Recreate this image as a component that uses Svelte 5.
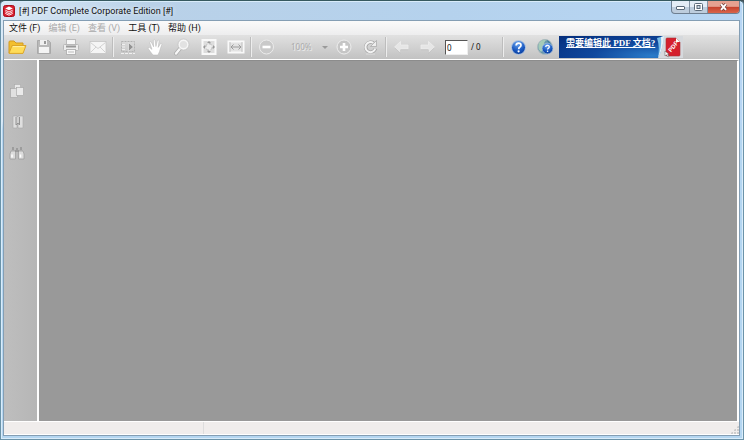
<script>
  const menus = [
    { label: '文件 (F)', off: false },
    { label: '编辑 (E)', off: true },
    { label: '查看 (V)', off: true },
    { label: '工具 (T)', off: false },
    { label: '帮助 (H)', off: false },
  ];
  let page = $state('0');
  let zoom = $state('100%');
</script>

<div class="window">
  <header class="title">
    <svg class="logo" viewBox="0 0 12 12" aria-hidden="true">
      <rect x=".5" y=".5" width="11" height="11" rx="2" fill="#d91f2d" stroke="#a90f1c" />
      <path d="M6 1.6 9.8 3.4 6 5.3 2.2 3.4Z" fill="#fff" />
      <path d="M2.3 5.2 6 7l3.7-1.8M2.3 6.8 6 8.6l3.7-1.8M2.3 8.4 6 10.2l3.7-1.8" fill="none" stroke="#fff" stroke-width=".9" />
    </svg>
    <h1>[#] PDF Complete Corporate Edition [#]</h1>
    <div class="controls">
      <button aria-label="Minimize">
        <svg viewBox="0 0 11 8"><rect x="1.5" y="3.5" width="8" height="3" rx=".5" fill="#fff" stroke="#5b6a79" /></svg>
      </button>
      <button aria-label="Maximize">
        <svg viewBox="0 0 11 8"><rect x="1.5" y=".5" width="8" height="7" rx="1" fill="#fff" stroke="#5b6a79" /><rect x="4" y="2.5" width="3" height="3" fill="#cdd9e5" stroke="#5b6a79" /></svg>
      </button>
      <button class="close" aria-label="Close">
        <svg viewBox="0 0 11 8"><path d="M3 1.2 8 6.8M8 1.2 3 6.8" stroke="#75413c" stroke-width="3.4" /><path d="M3 1.2 8 6.8M8 1.2 3 6.8" stroke="#fff" stroke-width="2" /></svg>
      </button>
    </div>
  </header>

  <div class="client">
    <nav class="menu">
      {#each menus as m}
        <button disabled={m.off}>{m.label}</button>
      {/each}
    </nav>

    <div class="toolbar">
      <button aria-label="打开">
        <svg viewBox="0 0 20 18">
          <path d="M2 15V4q0-1 1-1h4l2 2h7v3" fill="#f3bf2e" stroke="#d39b22" />
          <path d="M2 15.4 5 7.5h14l-3 7.9Z" fill="#ffdc59" stroke="#dba52a" />
          <path d="M6 8.6h11" stroke="#fff0a5" />
        </svg>
      </button>
      <button disabled aria-label="保存">
        <svg viewBox="0 0 20 18">
          <path d="M4 2.5h10.5l2 2v11h-13v-13Z" fill="#b9b9b9" stroke="#a9a9a9" />
          <rect x="6" y="2" width="7" height="5" fill="#f0f0f0" /><rect x="10" y="3" width="2" height="3" fill="#999" />
          <rect x="5" y="9" width="10" height="6" fill="#f4f4f4" />
        </svg>
      </button>
      <button disabled aria-label="打印">
        <svg viewBox="0 0 20 18">
          <rect x="5.5" y="1.5" width="9" height="6" fill="#f6f6f6" stroke="#bbb" />
          <rect x="2.5" y="6.5" width="15" height="6" rx="1" fill="#ececec" stroke="#b8b8b8" />
          <path d="M5 8.5h10" stroke="#999" stroke-width="2" />
          <rect x="5.5" y="11.5" width="9" height="5" fill="#f8f8f8" stroke="#b5b5b5" /><path d="M7 14h6" stroke="#bbb" />
        </svg>
      </button>
      <button disabled aria-label="邮件">
        <svg viewBox="0 0 20 18">
          <rect x="2" y="3.5" width="16" height="12" fill="#f5f5f5" stroke="#c5c5c5" stroke-width=".8" />
          <path d="m2.5 4.5 7.5 6 7.5-6M2.5 14.5 8 9M17.5 14.5 12 9" fill="none" stroke="#d2d2d2" />
        </svg>
      </button>
      <span class="sep"></span>
      <button disabled aria-label="选择">
        <svg viewBox="0 0 20 18">
          <rect x="3.5" y="3.5" width="13" height="10" fill="none" stroke="#b2b2b2" stroke-dasharray="2 1" />
          <path d="M4 6.5h4M4 9h4M4 11.5h4M3 15.5h14" stroke="#f0f0f0" stroke-dasharray="3 1" />
          <path d="M10.5 4.5v9l5-4.5Z" fill="#939393" stroke="#e4e4e4" stroke-width=".8" />
        </svg>
      </button>
      <button disabled aria-label="手形">
        <svg viewBox="0 0 20 18">
          <path d="M8 17Q5.500 14 3.300 10.800q-.6-1.600 1-1.500L7 11.400 4.700 4.600q.2-1.500 1.500-.8l2.400 5L8.300 2q.8-1.400 1.800 0l.8 6.500 1.500-6q1.300-1 1.700.4l-.9 6.500 2.400-4q1.400-.5 1.300.9-1.500 4-2.400 7.300L13 17Z" fill="#fff" stroke="#b4b4b4" stroke-width=".5" />
        </svg>
      </button>
      <button disabled aria-label="放大镜">
        <svg viewBox="0 0 20 18">
          <path d="m8.500 10-4.500 5.500" stroke="#a8a8a8" stroke-width="3.600" stroke-linecap="round" /><path d="m8.500 10-4.500 5.500" stroke="#f7f7f7" stroke-width="2.400" stroke-linecap="round" />
          <circle cx="11.500" cy="6.500" r="4.500" fill="#e2e2e2" stroke="#f6f6f6" stroke-width="1.800" /><circle cx="11.500" cy="6.500" r="5.500" fill="none" stroke="#b5b5b5" stroke-width=".5" />
        </svg>
      </button>
      <button disabled aria-label="适合页面">
        <svg viewBox="0 0 20 18">
          <rect x="3.5" y="2" width="13" height="14" fill="#ddd" stroke="#f9f9f9" stroke-width="2" />
          <circle cx="10" cy="9" r="3.300" fill="#eee" stroke="#aaa" stroke-dasharray="3 2" />
          <path d="m8 5 2-2 2 2ZM8 13l2 2 2-2ZM6 7 4 9l2 2ZM14 7l2 2-2 2Z" fill="#999" />
        </svg>
      </button>
      <button disabled aria-label="适合宽度">
        <svg viewBox="0 0 20 18">
          <rect x="2.500" y="3.500" width="15" height="11" fill="#e3e3e3" stroke="#f9f9f9" stroke-width="2" />
          <path d="M5 9h10M7.500 6.500 5 9l2.500 2.500M12.500 6.500 15 9l-2.500 2.500" fill="none" stroke="#9b9b9b" /><path d="M4 4v10M16 4v10" stroke="#aaa" stroke-width=".6" />
        </svg>
      </button>
      <span class="sep"></span>
      <button disabled aria-label="缩小">
        <svg viewBox="0 0 20 18">
          <circle cx="10.500" cy="9" r="7" fill="#c9c9c9" stroke="#ebebeb" /><path d="M6.500 9h8" stroke="#fff" stroke-width="2.600" />
        </svg>
      </button>
      <label class="zoom">
        <select aria-label="缩放" bind:value={zoom} disabled><option>100%</option></select>
        <i></i>
      </label>
      <button disabled aria-label="放大">
        <svg viewBox="0 0 20 18">
          <circle cx="10" cy="9" r="7" fill="#c6c6c6" stroke="#eee" /><path d="M6 9h8M10 5v8" stroke="#fff" stroke-width="2.600" />
        </svg>
      </button>
      <button disabled aria-label="旋转">
        <svg viewBox="0 0 20 18">
          <path d="M14.500 10.500a5 5 0 1 1-2-5.500" fill="none" stroke="#a2a2a2" stroke-width="3.400" />
          <path d="M9.500 8.500h6v-6Z" fill="#eee" stroke="#a5a5a5" stroke-width=".7" />
          <path d="M14.300 10.500a5 5 0 1 1-2-5.500" fill="none" stroke="#f3f3f3" stroke-width="2" />
          <path d="M5 16h9" stroke="#ddd" />
        </svg>
      </button>
      <span class="sep"></span>
      <button disabled aria-label="上一页">
        <svg viewBox="0 0 20 18"><path d="m3.500 9 6-5.500V7H17v4H9.500v3.500Z" fill="#e6e6e6" stroke="#eee" stroke-width=".8" /><path d="m3.500 9.700 6 5.500v-3.500H17" fill="none" stroke="#bcbcbc" stroke-width=".6" /></svg>
      </button>
      <button disabled aria-label="下一页">
        <svg viewBox="0 0 20 18"><path d="m16.500 9-6-5.500V7H3v4h7.500v3.500Z" fill="#e6e6e6" stroke="#eee" stroke-width=".8" /><path d="m16.500 9.700-6 5.500v-3.500H3" fill="none" stroke="#bcbcbc" stroke-width=".6" /></svg>
      </button>
      <label class="page"><input aria-label="页码" bind:value={page} /> <span>/ 0</span></label>
      <span class="sep"></span>
      <button aria-label="帮助">
        <svg viewBox="0 0 20 18">
          <defs><radialGradient id="blue" cx=".45" cy=".2" r=".9"><stop stop-color="#6fa8f0" /><stop offset=".6" stop-color="#1655be" /><stop offset="1" stop-color="#07358d" /></radialGradient></defs>
          <circle cx="10.500" cy="9.500" r="7" fill="url(#blue)" stroke="#b9cbe2" />
          <path d="M8.100 7.500q.2-2.300 2.500-2.300t2.400 2q0 1.300-1.300 2-1 .6-1 2" fill="none" stroke="#fff" stroke-width="1.700" /><circle cx="10.600" cy="13.300" r="1.100" fill="#fff" />
        </svg>
      </button>
      <button aria-label="在线帮助">
        <svg viewBox="0 0 20 18">
          <circle cx="10" cy="9" r="7.500" fill="#6798ad" stroke="#aab9bd" />
          <path d="M4 5q3-4 7-3l-2 3 1 2-3 2 1 3-2 2q-4-3-2-9Z" fill="#a5cbb8" /><path d="M12 2q4 2 4 5l-3-2Z" fill="#417f9c" />
          <circle cx="12.500" cy="10.500" r="5.400" fill="url(#blue)" stroke="#a7c1df" stroke-width=".7" />
          <path d="M10.700 9q.1-1.700 1.800-1.700t1.800 1.500q0 1-1 1.500-.7.400-.7 1.300" fill="none" stroke="#fff" stroke-width="1.300" /><circle cx="12.600" cy="13.200" r=".8" fill="#fff" />
        </svg>
      </button>
      <a class="banner" href="#edit">
        <span>需要编辑此 PDF 文档?</span>
        <svg viewBox="0 0 26 22" aria-hidden="true">
          <path d="M6 0h20v22H1Q6 12 6 0Z" fill="#d6d9dd" /><path d="M7 0Q6 13 1 22 3 11 0 2Z" fill="#79bde8" /><path d="M7 0Q6 13 1 22 5 10 4 1Z" fill="#e8f2f8" />
          <path d="M9 3q0-1 1-1h9l4 4v13q0 1-1 1H10q-1 0-1-1Z" fill="#d5202d" stroke="#a33" stroke-width=".6" /><path d="m19 2 4 4h-4Z" fill="#fff" />
          <text x="14" y="16.500" transform="rotate(-50 14 16.500)" font-family="Liberation Sans, sans-serif" font-size="6" font-weight="700" fill="#fff">PDF</text>
          <path d="M8 15v5l1.500-1.200L11 21l1-.6-1.300-2.200H12Z" fill="#fff" stroke="#555" stroke-width=".5" />
        </svg>
      </a>
    </div>

    <main>
      <aside>
        <button disabled aria-label="页面">
          <svg viewBox="0 0 16 16"><rect x="5.500" y="1.500" width="6" height="9" fill="#e9e9e9" stroke="#aaa" stroke-width=".6" /><rect x="1.500" y="5.500" width="7" height="9" fill="#e0e0e0" stroke="#a2a2a2" stroke-width=".6" /><rect x="7.500" y="4.500" width="7" height="8" fill="#eaeaea" stroke="#a2a2a2" stroke-width=".6" /></svg>
        </button>
        <button disabled aria-label="书签">
          <svg viewBox="0 0 16 16"><path d="M4 2h4v12H4ZM9 2h5v12H9Z" fill="#dfdfdf" stroke="#aaa" stroke-width=".6" /><path d="M7 3v8l2-2 1.500 2V3" fill="#cfcfcf" stroke="#939393" /></svg>
        </button>
        <button disabled aria-label="查找">
          <svg viewBox="0 0 16 16"><path d="M2 6h4.500v8H1V9Zm7.500 0H14l1 3v5H9.500Z" fill="#dcdcdc" stroke="#999" stroke-width=".7" /><path d="M4 2v3M12 2v3M6 6h4M7 4h2" stroke="#929292" stroke-width="1.500" /><path d="M3 9.500v3M11.500 9.500v3" stroke="#fff" stroke-width="1.500" /></svg>
        </button>
      </aside>
      <section aria-label="文档"></section>
    </main>

    <footer><span></span><span class="grip"></span></footer>
  </div>
</div>

<style>
  :global(body) { background: #44545b; }
  * { box-sizing: border-box; }
  button { padding: 0; border: 0; background: none; font: inherit; color: inherit; }
  svg { display: block; }
  .window {
    min-height: 100vh;
    display: flex;
    flex-direction: column;
    padding: 0 3px 3px 2px;
    border: 1px solid #6b93a9;
    border-top-color: #36595f;
    border-radius: 5px 5px 1px 1px;
    background: linear-gradient(#fff0 120px, #b4d6f1 128px), linear-gradient(90deg, #d9e8f5, #b9d1e8 20%, #b5d2ed 60%, #b7d6f4);
    box-shadow: inset 0 0 0 1px #d9ecfa;
    font: 9px/14px Roboto, "Noto Sans CJK SC", sans-serif;
    color: #111;
  }
  .title { height: 19px; display: flex; align-items: center; gap: 4px; }
  .logo { width: 12px; height: 12px; }
  h1 { flex: 1; margin: 0; font-size: 9px; font-weight: 400; line-height: 18px; text-shadow: 0 0 4px #fff; }
  .controls {
    align-self: flex-start;
    display: flex;
    height: 13px;
    border: 1px solid #6e7f91;
    border-top: 0;
    border-radius: 0 0 4px 4px;
    overflow: hidden;
    background: linear-gradient(#e4edf6 50%, #bdcddd 50%);
  }
  .controls button { width: 18px; display: grid; place-items: center; border-right: 1px solid #8292a3; }
  .controls svg { width: 11px; height: 8px; }
  .controls .close { width: 31px; border: 0; background: linear-gradient(#e6a190 45%, #c6412c 50%, #d9654b); }
  .client { flex: 1; display: flex; flex-direction: column; border: 1px solid #849eb4; background: #f0eeee; }
  .menu { height: 14px; display: flex; gap: 8px; padding-left: 5px; background: linear-gradient(#fafafa, #ededee); }
  .menu button { height: 13px; line-height: 12px; }
  .menu button:disabled { color: #aaa; }
  .toolbar {
    height: 25px;
    display: flex;
    align-items: center;
    gap: 1px;
    border-bottom: 1px solid #fff;
    background: linear-gradient(#e1e1e1, #c2c2c2);
  }
  .toolbar button { width: 26px; height: 22px; display: grid; place-items: center; flex: none; }
  .toolbar button svg { width: 20px; height: 18px; }
  .sep { width: 2px; height: 20px; flex: none; background: linear-gradient(90deg, #bdbdbd 50%, #ededed 50%); }
  .zoom { width: 50px; display: flex; align-items: center; justify-content: space-between; padding: 0 2px 0 11px; }
  select { appearance: none; width: 28px; padding: 0; border: 0; background: none; font: 8px/14px "Noto Sans", sans-serif; color: #aaa; opacity: 1; text-shadow: 1px 1px #eee; }
  .zoom i { border: 3px solid transparent; border-top-color: #9a9a9a; border-bottom: 0; }
  .page { width: 59px; display: flex; align-items: center; gap: 3px; padding-left: 3px; }
  input { width: 23px; height: 15px; padding: 0 1px; border: 1px solid #eee; border-top-color: #555; border-left-color: #555; background: #fff; font: 8px/12px "Noto Sans", sans-serif; color: #111; }
  .page span { font: 8px/14px "Noto Sans", sans-serif; }
  .banner { width: 124px; height: 22px; display: flex; justify-content: space-between; overflow: hidden; background: radial-gradient(ellipse at 75% 90%, #2b7cc9, #10489d 45%, #052d7b); color: #fff; }
  .banner span { padding-left: 7px; white-space: nowrap; font: bold 9px/14px "Liberation Serif", "Noto Sans CJK SC", serif; text-decoration: underline; }
  .banner svg { width: 26px; height: 22px; flex: none; }
  main { flex: 1; display: flex; }
  aside { width: 35px; flex: none; display: flex; flex-direction: column; gap: 14px; padding: 22px 0 0 5px; border-right: 2px solid #fff; background: linear-gradient(90deg, #bebebe, #b6b6b6); }
  aside button { width: 16px; height: 17px; }
  aside svg { width: 16px; height: 16px; }
  section { flex: 1; border-right: 2px solid #fff; border-top: 1px solid #8c8c8c; background: #999; }
  footer { height: 14px; display: flex; justify-content: space-between; border-top: 1px solid #fff; border-bottom: 1px solid #fff; background: #f0edec; }
  footer span { width: 200px; border-right: 1px solid #ddd; }
  footer .grip { width: 9px; height: 9px; align-self: flex-end; border: 0; background: radial-gradient(circle at 2px 2px, #ccc 1px, transparent 1px) 0 0 / 3px 3px; clip-path: polygon(100% 0, 100% 100%, 0 100%); }
</style>
